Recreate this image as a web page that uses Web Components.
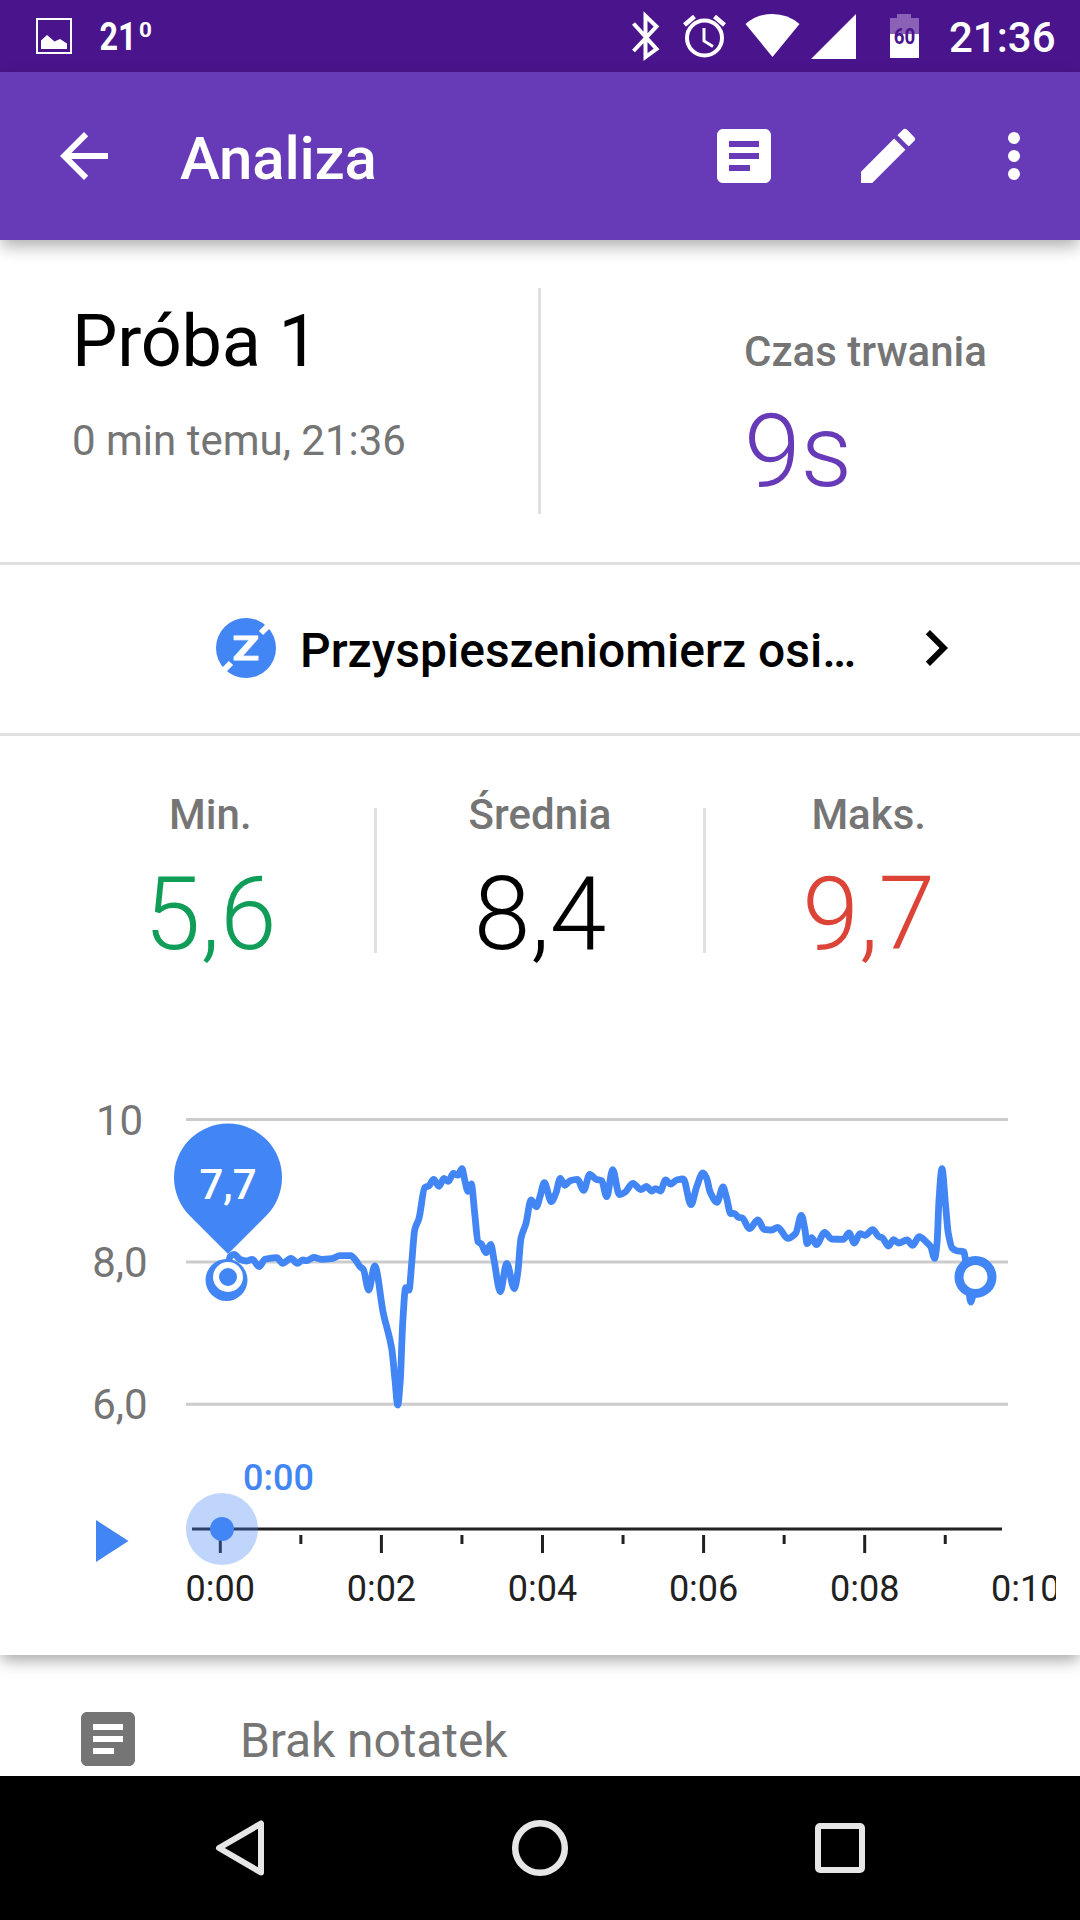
<!DOCTYPE html>
<html lang="pl">
<head>
<meta charset="utf-8">
<title>Analiza</title>
<style>
html, body { margin: 0; padding: 0; }
body { width: 1080px; height: 1920px; overflow: hidden; background: #fff; font-family: Roboto, "Noto Sans", sans-serif; }
</style>
</head>
<body>
<analysis-screen></analysis-screen>
<script>
const define = (name, html, setup) => customElements.define(name, class extends HTMLElement {
  constructor() {
    super();
    this.attachShadow({ mode: 'open' }).innerHTML = html;
  }
  connectedCallback() { if (setup) setup(this, this.shadowRoot); }
});

/* Icons on the 24-unit grid */
const ICONS = {
  back: '<path d="M20 11H7.8l5.6-5.6L12 4l-8 8 8 8 1.4-1.4L7.8 13H20z"/>',
  note: '<path fill-rule="evenodd" d="M19 3H5c-1.1 0-2 .9-2 2v14c0 1.100.9 2 2 2h14c1.100 0 2-.9 2-2V5c0-1.100-.9-2-2-2zM14 17H7v-2h7zM17 13H7v-2h10zM17 9H7V7h10z"/>',
  edit: '<path d="M3 17.250V21h3.750L17.810 9.940l-3.750-3.750zM20.710 7.040a1 1 0 0 0 0-1.410l-2.340-2.340a1 1 0 0 0-1.410 0l-1.830 1.830 3.750 3.750z"/>',
  more: '<circle cx="12" cy="6" r="2"/><circle cx="12" cy="12" r="2"/><circle cx="12" cy="18" r="2"/>',
  chevron: '<path d="M10 6 8.590 7.410 13.170 12l-4.580 4.590L10 18l6-6z"/>'
};
define('md-icon', `<style>:host{display:block;width:72px;height:72px;flex:none}svg{display:block;width:100%;height:100%;fill:currentColor}</style><svg viewBox="0 0 24 24"></svg>`,
  (el, root) => { root.querySelector('svg').innerHTML = ICONS[el.getAttribute('name')]; });

define('status-bar', `
<style>
:host{display:flex;height:72px;background:#4a148c;color:#fff;align-items:flex-start;box-sizing:border-box}
svg{display:block;flex:none}
.grow{flex:1}
.clock{font-size:42px;font-weight:500;line-height:72px;width:131px;padding-top:1.500px;box-sizing:border-box}
</style>
<svg width="180" height="72" fill="#fff">
  <rect x="37" y="19" width="34" height="34" fill="none" stroke="#fff" stroke-width="2"/>
  <path d="M41 40.500L47 35l7.500 6.500 5.500-2.500 7 4.500V49H41z"/>
  <text transform="translate(99.500 50) scale(.85 1)" font-size="38" font-weight="700">21</text>
  <text transform="translate(139 37) scale(1.070 1)" font-size="21" font-weight="700">0</text>
</svg>
<span class="grow"></span>
<svg width="349" height="72" viewBox="600 0 349 72" fill="#fff">
  <path d="M633.500 23.500l23 25.500-11 8V16l11 10.500-23 24.500" fill="none" stroke="#fff" stroke-width="4" stroke-linejoin="miter"/>
  <circle cx="704.500" cy="38" r="17.500" fill="none" stroke="#fff" stroke-width="4"/>
  <path d="M704 28v13l9 5.500" fill="none" stroke="#fff" stroke-width="3"/>
  <path d="M684.500 25l10-8.500M724.500 25l-10-8.500" stroke="#fff" stroke-width="4.500"/>
  <path d="M772.500 57L745.500 24Q757 14 772.500 14T799.500 24z"/>
  <path d="M856 14v45h-45z"/>
  <path d="M897 14h14v4h8v16h-29V18h7z" fill="#8b61b7"/>
  <rect x="890" y="34" width="29" height="24"/>
  <text x="893.700" y="44" font-size="22" font-weight="700" fill="#4a148c" textLength="21.500" lengthAdjust="spacingAndGlyphs">60</text>
</svg>
<span class="clock">21:36</span>`);

define('app-bar', `
<style>
:host{display:flex;align-items:center;height:168px;box-sizing:border-box;padding:0 30px 0 48px;background:#673ab7;color:#fff;position:relative;z-index:2;box-shadow:0 7px 16px -1px rgba(0,0,0,.33)}
.title{flex:1;margin-left:60px;font-size:60px;font-weight:500;line-height:72px;padding-top:5px;letter-spacing:-.2px}
.actions{display:flex}
.actions md-icon{margin-left:72px}
.actions md-icon:last-child{margin-left:54px}
</style>
<md-icon name="back"></md-icon>
<span class="title"><slot></slot></span>
<span class="actions"><md-icon name="note"></md-icon><md-icon name="edit"></md-icon><md-icon name="more"></md-icon></span>`);

define('run-summary', `
<style>
:host{display:flex;height:325px;box-sizing:border-box;border-bottom:3px solid #e0e0e0}
.main{width:538px;box-sizing:border-box;padding:60px 0 0 72px}
.name{font-size:72px;line-height:84px;color:#000;letter-spacing:-.2px}
.when{font-size:42px;line-height:49px;margin-top:32px;color:#757575}
.rule{width:3px;height:226px;margin-top:48px;background:#e0e0e0}
.side{padding:87px 0 0 203px}
.label{font-size:42px;font-weight:500;line-height:49px;color:#757575}
.value{font-size:102px;font-weight:300;line-height:120px;margin-top:15px;color:#673ab7}
</style>
<div class="main"><div class="name"><slot name="name"></slot></div><div class="when"><slot name="when"></slot></div></div>
<div class="rule"></div>
<div class="side"><div class="label">Czas trwania</div><div class="value"><slot name="duration"></slot></div></div>`);

define('sensor-row', `
<style>
:host{display:flex;align-items:center;height:171px;box-sizing:border-box;padding:0 108px 2px 216px;border-bottom:3px solid #e0e0e0}
svg{display:block;flex:none}
.name{flex:1;margin-left:24px;font-size:48px;font-weight:500;line-height:56px;color:#000;white-space:nowrap;padding-top:5px}
</style>
<svg width="60" height="60"><circle cx="30" cy="30" r="30" fill="#4285f4"/><path d="M45 15L56 4M15 45L4 56" stroke="#fff" stroke-width="6"/><text x="16.500" y="42" font-size="34" font-weight="700" fill="#fff" stroke="#fff" stroke-width=".8" textLength="26.500" lengthAdjust="spacingAndGlyphs">Z</text></svg>
<span class="name"><slot></slot></span>
<md-icon name="chevron"></md-icon>`);

define('stat-value', `
<style>
:host{display:block;flex:1;text-align:center}
.label{font-size:42px;font-weight:500;line-height:49px;color:#757575}
.value{font-size:102px;font-weight:300;line-height:120px;margin-top:15px;color:var(--value,#000)}
</style>
<div class="label"></div><div class="value"><slot></slot></div>`,
  (el, root) => { root.querySelector('.label').textContent = el.getAttribute('label'); });

define('stats-row', `
<style>
:host{display:flex;height:264px;box-sizing:border-box;padding:54px 47px 0}
.rule{width:3px;height:145px;margin-top:18px;background:#e0e0e0}
</style>
<stat-value label="Min." style="--value:#0f9d58">5,6</stat-value>
<div class="rule"></div>
<stat-value label="Średnia">8,4</stat-value>
<div class="rule"></div>
<stat-value label="Maks." style="--value:#db4437;text-indent:-2px">9,7</stat-value>`);

/* Samples of the recorded series in thirds of a pixel, relative to (340,1090) */
const SAMPLES = [
  [-340,560],[-330,500],[-317,493],[-300,508],[-280,513],[-263,508],[-243,530],[-225,508],[-190,503],[-172,520],[-147,505],[-128,520],[-112,510],[-100,512],[-78,502],[-55,508],[-25,506],[0,497],
  [32,497],[48,512],[60,530],[70,538],[86,600],[104,528],[130,670],[155,775],[165,870],[173,945],[181,870],[188,700],[197,593],[207,600],[215,520],[224,420],[237,385],[254,293],[267,287],[281,268],[297,289],[312,265],[325,274],[340,250],[354,255],[366,236],[374,270],[384,304],[394,282],[404,370],[414,455],[424,462],[438,488],[452,463],[462,510],[481,605],[500,520],[523,596],[533,550],[543,445],[558,400],[573,330],[589,350],[600,320],[613,278],[634,335],[648,308],[661,265],[674,286],[690,272],[712,268],[731,301],[749,253],[768,268],[785,272],[800,320],[818,239],[838,314],[856,306],[878,280],[904,299],[919,289],[935,303],[947,296],[961,303],[977,270],[992,282],[1010,270],[1030,267],
  [1053,344],[1070,290],[1089,249],[1100,265],[1110,305],[1131,337],[1149,291],[1160,325],[1172,371],[1183,370],[1195,382],[1207,384],[1228,416],[1254,390],[1272,418],[1295,420],[1313,412],[1343,445],[1367,430],[1384,376],[1395,420],[1401,461],[1415,443],[1429,464],[1454,427],[1475,447],[1510,448],[1527,429],[1543,459],[1560,431],[1575,436],[1598,419],[1617,440],[1627,443],[1645,468],[1661,449],[1676,459],[1701,450],[1718,466],[1737,440],[1760,457],[1772,470],[1784,505],[1791,460],[1797,330],[1806,236],[1817,350],[1825,430],[1837,475],[1850,482],[1871,485],[1878,520],[1893,636],[1906,560]
].map(([x, y]) => [340 + x / 3, 1090 + y / 3]);

/* Monotone cubic interpolation keeps each peak at its sample */
function curve(p) {
  const n = p.length, s = [], m = [];
  for (let i = 0; i < n - 1; i++) s.push((p[i + 1][1] - p[i][1]) / (p[i + 1][0] - p[i][0]));
  for (let i = 0; i < n; i++) {
    const a = s[i - 1], b = s[i];
    if (a === undefined) m.push(b);
    else if (b === undefined) m.push(a);
    else m.push(a * b <= 0 ? 0 : 2 * a * b / (a + b));
  }
  let d = `M${p[0]}`;
  for (let i = 0; i < n - 1; i++) {
    const h = (p[i + 1][0] - p[i][0]) / 3;
    d += `C${(p[i][0] + h).toFixed(1)},${(p[i][1] + h * m[i]).toFixed(1)} ${(p[i + 1][0] - h).toFixed(1)},${(p[i + 1][1] - h * m[i + 1]).toFixed(1)} ${p[i + 1][0].toFixed(1)},${p[i + 1][1].toFixed(1)}`;
  }
  return d;
}

define('sensor-chart', `
<style>
:host{display:block;height:655px}
svg{display:block}
text{font-family:Roboto,"Noto Sans",sans-serif}
.y{font-size:42px;fill:#757575;text-anchor:middle}
.t{font-size:36px;fill:#212121;text-anchor:middle}
</style>
<svg width="1080" height="655" viewBox="0 1000 1080 655">
  <path d="M186 1119.500h822M186 1262h822M186 1404.200h822" stroke="#ccc" stroke-width="3"/>
  <text class="y" x="119.500" y="1134.500">10</text><text class="y" x="120" y="1277">8,0</text><text class="y" x="120" y="1419">6,0</text>
  <path class="line" fill="none" stroke="#4285f4" stroke-width="6.800" stroke-linejoin="round" stroke-linecap="round"/>
  <circle cx="226.500" cy="1280" r="21" fill="#4285f4"/><circle cx="228" cy="1277" r="12" fill="#4285f4" stroke="#fff" stroke-width="6"/>
  <circle cx="975.500" cy="1277" r="16.500" fill="#fff" stroke="#4285f4" stroke-width="9"/>
  <path d="M189.800 1215.700A54 54 0 1 1 266.200 1215.700L228 1254z" fill="#4285f4"/>
  <text x="228" y="1199" font-size="42" font-weight="500" fill="#fff" text-anchor="middle">7,7</text>
  <text x="278.500" y="1490" font-size="36" font-weight="500" fill="#4285f4" text-anchor="middle">0:00</text>
  <path d="M96 1520l32.500 21L96 1562z" fill="#4285f4"/>
  <path d="M192 1529h810" stroke="#212121" stroke-width="3"/>
  <g class="ticks" stroke="#212121" stroke-width="3"></g>
  <circle cx="222" cy="1529" r="36" fill="#4285f4" fill-opacity=".34"/><circle cx="222" cy="1529" r="12" fill="#4285f4"/>
  <clipPath id="edge"><path d="M0 1560h1056v60H0z"/></clipPath>
  <g class="times" clip-path="url(#edge)"></g>
</svg>`,
  (el, root) => {
    root.querySelector('.line').setAttribute('d', curve(SAMPLES));
    let ticks = '', times = '';
    for (let s = 0; s <= 10; s++) {
      const x = 220.300 + s * 80.550;
      if (s < 10) ticks += `<path d="M${x} 1535v${s % 2 ? 9 : 18}"/>`;
      if (s % 2 === 0) times += `<text class="t" x="${x}" y="1601">0:${String(s).padStart(2, '0')}</text>`;
    }
    root.querySelector('.ticks').innerHTML = ticks;
    root.querySelector('.times').innerHTML = times;
  });

define('run-card', `<style>:host{display:block;background:#fff;position:relative;z-index:1;box-shadow:0 6px 15px -1px rgba(0,0,0,.36)}</style><slot></slot>`);

define('notes-row', `
<style>
:host{display:flex;height:121px;overflow:hidden;color:#757575;background:#fff;padding:0 72px;box-sizing:border-box}
md-icon{margin-top:48px}
span{font-size:48px;line-height:56px;margin:58px 0 0 96px;letter-spacing:-.1px}
</style>
<md-icon name="note"></md-icon><span><slot></slot></span>`);

define('nav-bar', `
<style>:host{display:flex;justify-content:space-between;height:144px;background:#000;padding:0 204px;box-sizing:border-box}svg{display:block}</style>
<svg width="72" height="144" fill="none" stroke="#e6e6e6" stroke-width="6" stroke-linejoin="round"><path d="M57 47.500v49L15 72z"/></svg>
<svg width="72" height="144" fill="none" stroke="#e6e6e6" stroke-width="6.500"><circle cx="36" cy="72" r="24.800"/></svg>
<svg width="72" height="144" fill="none" stroke="#e6e6e6" stroke-width="6"><rect x="14" y="50" width="44" height="44" rx="2"/></svg>`);

define('analysis-screen', `
<style>:host{display:flex;flex-direction:column;width:1080px;height:1920px}</style>
<status-bar></status-bar>
<app-bar>Analiza</app-bar>
<run-card>
  <run-summary><span slot="name">Próba 1</span><span slot="when">0 min temu, 21:36</span><span slot="duration">9s</span></run-summary>
  <sensor-row>Przyspieszeniomierz osi…</sensor-row>
  <stats-row></stats-row>
  <sensor-chart></sensor-chart>
</run-card>
<notes-row>Brak notatek</notes-row>
<nav-bar></nav-bar>`);
</script>
</body>
</html>
